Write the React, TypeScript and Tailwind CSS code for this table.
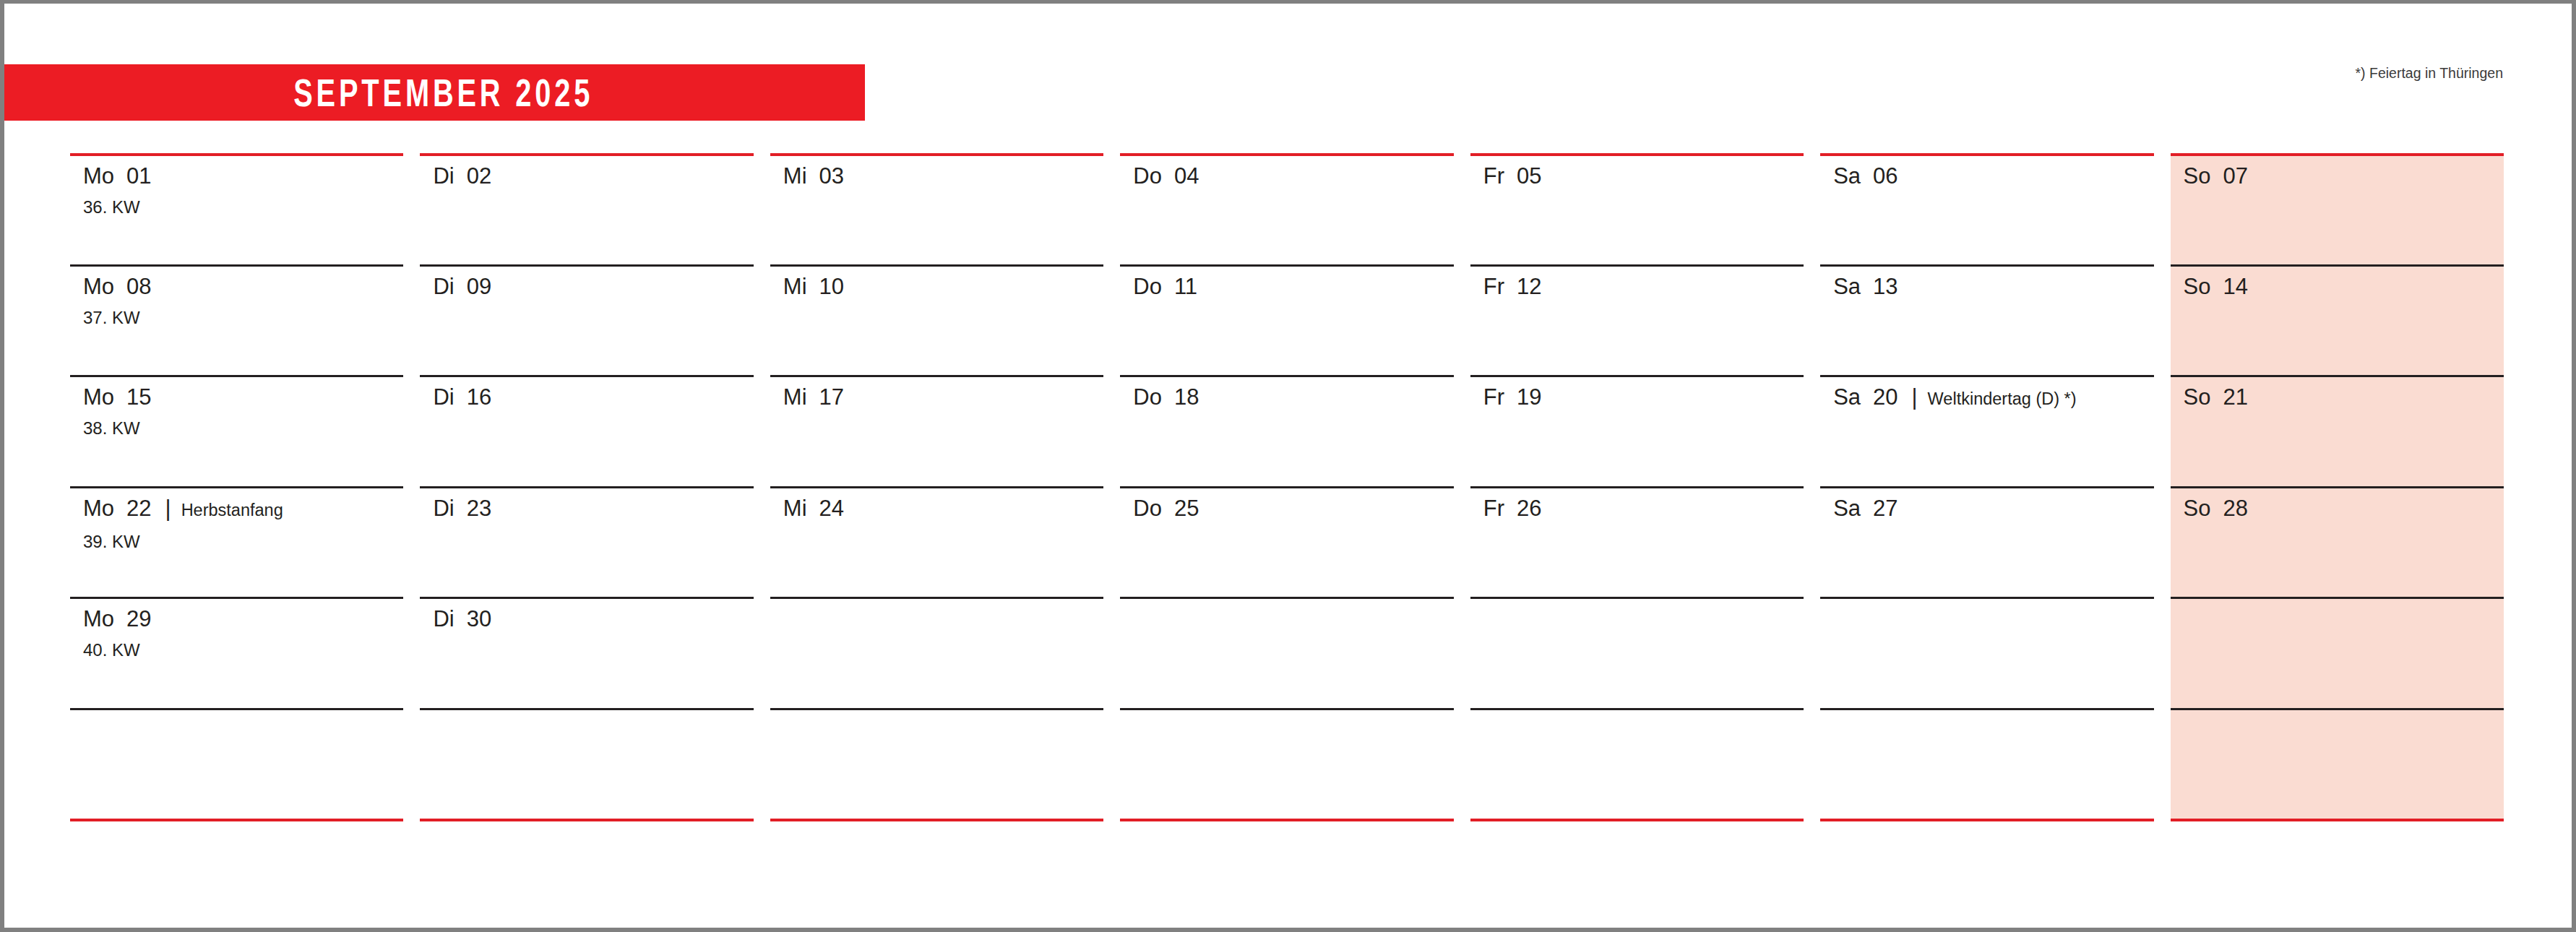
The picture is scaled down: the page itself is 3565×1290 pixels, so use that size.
import React from "react";

type Cell = { wd: string; d: string; kw?: string; note?: string } | null;

const rows: Cell[][] = [
  [
    { wd: "Mo", d: "01", kw: "36. KW" },
    { wd: "Di", d: "02" },
    { wd: "Mi", d: "03" },
    { wd: "Do", d: "04" },
    { wd: "Fr", d: "05" },
    { wd: "Sa", d: "06" },
    { wd: "So", d: "07" },
  ],
  [
    { wd: "Mo", d: "08", kw: "37. KW" },
    { wd: "Di", d: "09" },
    { wd: "Mi", d: "10" },
    { wd: "Do", d: "11" },
    { wd: "Fr", d: "12" },
    { wd: "Sa", d: "13" },
    { wd: "So", d: "14" },
  ],
  [
    { wd: "Mo", d: "15", kw: "38. KW" },
    { wd: "Di", d: "16" },
    { wd: "Mi", d: "17" },
    { wd: "Do", d: "18" },
    { wd: "Fr", d: "19" },
    { wd: "Sa", d: "20", note: "Weltkindertag (D) *)" },
    { wd: "So", d: "21" },
  ],
  [
    { wd: "Mo", d: "22", kw: "39. KW", note: "Herbstanfang" },
    { wd: "Di", d: "23" },
    { wd: "Mi", d: "24" },
    { wd: "Do", d: "25" },
    { wd: "Fr", d: "26" },
    { wd: "Sa", d: "27" },
    { wd: "So", d: "28" },
  ],
  [
    { wd: "Mo", d: "29", kw: "40. KW" },
    { wd: "Di", d: "30" },
    null,
    null,
    null,
    null,
    null,
  ],
  [null, null, null, null, null, null, null],
];

function DayCell({ cell, row, col }: { cell: Cell; row: number; col: number }) {
  const top =
    row === 0
      ? "border-t-[4px] border-t-[#E21E26]"
      : "border-t-[3px] border-t-[#231F20]";
  const bottom = row === 5 ? "border-b-[4px] border-b-[#E21E26]" : "";
  const bg = col === 6 ? "bg-[#FADCD2]" : "bg-white";
  return (
    <div className={`${top} ${bottom} ${bg} border-solid pl-[18px] pt-[12px] text-[#231F20]`}>
      {cell && (
        <>
          <div className="flex items-baseline text-[31px] leading-[31px] whitespace-nowrap">
            <span>{cell.wd}</span>
            <span className="ml-[17px]">{cell.d}</span>
            {cell.note && (
              <>
                <span className="ml-[19px] text-[#231F20]">|</span>
                <span className="ml-[14px] text-[23.5px]">{cell.note}</span>
              </>
            )}
          </div>
          {cell.kw && (
            <div className="mt-[16px] text-[24px] leading-[24px]">{cell.kw}</div>
          )}
        </>
      )}
    </div>
  );
}

export default function App() {
  return (
    <div className="w-[3565px] h-[1290px] bg-white border-solid border-[#808080] border-t-[5px] border-x-[6px] border-b-[6px] overflow-hidden [font-family:'Liberation_Sans',Arial,sans-serif]">
      <div className="flex flex-col">
        <div className="flex justify-between items-start pt-[84px]">
          <div className="w-[1191px] h-[78px] bg-[#EC1C24] flex items-center justify-center pl-[24px]">
            <span className="inline-block scale-x-[0.75] text-white font-bold text-[53px] leading-none tracking-[6.5px] whitespace-nowrap">
              SEPTEMBER 2025
            </span>
          </div>
          <div className="mt-[2px] mr-[95px] text-[19.5px] leading-[20px] text-[#3a3a3a]">
            *) Feiertag in Thüringen
          </div>
        </div>
        <div className="ml-[91px] mt-[45px] w-[3368px] grid grid-cols-7 gap-x-[23px] grid-rows-[repeat(5,153.5px)_157.5px]">
          {rows.map((r, ri) =>
            r.map((c, ci) => <DayCell key={`${ri}-${ci}`} cell={c} row={ri} col={ci} />)
          )}
        </div>
      </div>
    </div>
  );
}
